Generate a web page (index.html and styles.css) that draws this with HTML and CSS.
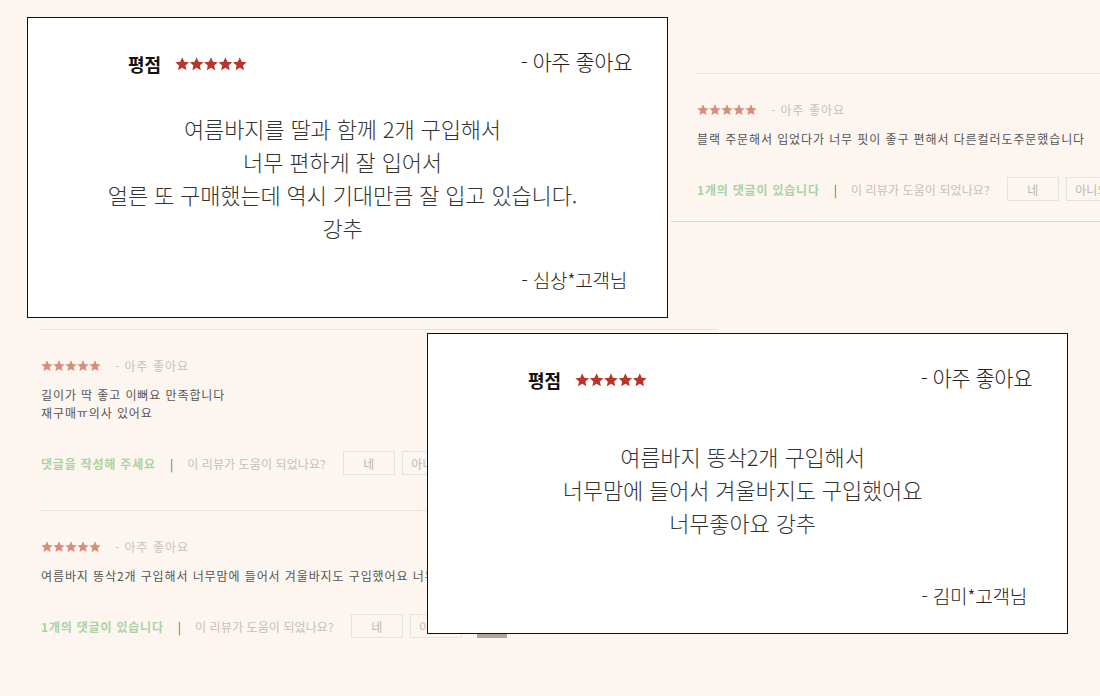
FILE: index.html
```html
<!DOCTYPE html>
<html lang="ko">
<head>
<meta charset="utf-8">
<title>리뷰</title>
<link rel="stylesheet" href="styles.css">
</head>
<body>
<svg class="defs" width="0" height="0" aria-hidden="true">
  <defs>
    <symbol id="star" viewBox="0 0 24 24">
      <polygon points="12,0.5 15.29,7.97 23.41,8.79 17.33,14.23 19.05,22.21 12,18.1 4.95,22.21 6.67,14.23 0.59,8.79 8.71,7.97"/>
    </symbol>
    <symbol id="stars5" viewBox="0 0 120 24">
      <use href="#star" x="0" y="0" width="24" height="24"/>
      <use href="#star" x="24" y="0" width="24" height="24"/>
      <use href="#star" x="48" y="0" width="24" height="24"/>
      <use href="#star" x="72" y="0" width="24" height="24"/>
      <use href="#star" x="96" y="0" width="24" height="24"/>
    </symbol>
  </defs>
</svg>
<main class="canvas">
  <section class="list list-right">
    <article class="review review-last">
      <div class="review-head">
        <svg class="stars-sm"><use href="#stars5"/></svg>
        <span class="grade">- 아주 좋아요</span>
      </div>
      <p class="review-text">블랙 주문해서 입었다가 너무 핏이 좋구 편해서 다른컬러도주문했습니다</p>
      <div class="review-foot">
        <span class="reply-count">1개의 댓글이 있습니다</span>
        <span class="divider">|</span>
        <span class="helpful">이 리뷰가 도움이 되었나요?</span>
        <button class="vote">네</button>
        <button class="vote">아니오</button>
      </div>
    </article>
    <div class="rule"></div>
  </section>

  <section class="list list-left">
    <article class="review">
      <div class="review-head">
        <svg class="stars-sm"><use href="#stars5"/></svg>
        <span class="grade">- 아주 좋아요</span>
      </div>
      <p class="review-text">길이가 딱 좋고 이뻐요 만족합니다<br>재구매ㅠ의사 있어요</p>
      <div class="review-foot">
        <span class="reply-count">댓글을 작성해 주세요</span>
        <span class="divider">|</span>
        <span class="helpful">이 리뷰가 도움이 되었나요?</span>
        <button class="vote">네</button>
        <button class="vote">아니오</button>
        <span class="write-btn"></span>
      </div>
    </article>
    <article class="review">
      <div class="review-head">
        <svg class="stars-sm"><use href="#stars5"/></svg>
        <span class="grade">- 아주 좋아요</span>
      </div>
      <p class="review-text">여름바지 똥삭2개 구입해서 너무맘에 들어서 겨울바지도 구입했어요 너무좋아요 강추</p>
      <div class="review-foot">
        <span class="reply-count">1개의 댓글이 있습니다</span>
        <span class="divider">|</span>
        <span class="helpful">이 리뷰가 도움이 되었나요?</span>
        <button class="vote">네</button>
        <button class="vote">아니오</button>
        <span class="write-btn"></span>
      </div>
    </article>
  </section>

  <article class="card card-1">
    <header class="card-head">
      <div class="score">
        <strong class="score-label">평점</strong>
        <svg class="stars-lg"><use href="#stars5"/></svg>
      </div>
      <span class="card-grade">- 아주 좋아요</span>
    </header>
    <div class="card-body">
      <p>여름바지를 딸과 함께 2개 구입해서<br>너무 편하게 잘 입어서<br>얼른 또 구매했는데 역시 기대만큼 잘 입고 있습니다.<br>강추</p>
    </div>
    <footer class="card-author">- 심상*고객님</footer>
  </article>

  <article class="card card-2">
    <header class="card-head">
      <div class="score">
        <strong class="score-label">평점</strong>
        <svg class="stars-lg"><use href="#stars5"/></svg>
      </div>
      <span class="card-grade">- 아주 좋아요</span>
    </header>
    <div class="card-body">
      <p>여름바지 똥삭2개 구입해서<br>너무맘에 들어서 겨울바지도 구입했어요<br>너무좋아요 강추</p>
    </div>
    <footer class="card-author">- 김미*고객님</footer>
  </article>
</main>
</body>
</html>
```

FILE: styles.css
```css
* {
  box-sizing: border-box;
  margin: 0;
  padding: 0;
}

html,
body {
  width: 1100px;
  height: 696px;
  overflow: hidden;
}

body {
  background: #fdf5ef;
  font-family: "Noto Sans CJK KR", "Noto Sans", sans-serif;
  color: #555;
}

.defs {
  position: absolute;
  width: 0;
  height: 0;
}

.canvas {
  position: relative;
  width: 1100px;
  height: 696px;
}

/* background review lists (collage pieces) */
.list {
  position: absolute;
}

.list-right {
  left: 697px;
  top: 73px;
  width: 403px;
}

.list-left {
  left: 41px;
  top: 329px;
  width: 677px;
}

.review {
  border-top: 1px solid #e9e2db;
  padding: 29px 0 35px;
}

.review-last {
  padding-bottom: 20px;
}

.rule {
  margin-left: -26px;
  border-top: 1px solid #ddd6cf;
}

.review-head {
  display: flex;
  align-items: center;
  gap: 14px;
  height: 14px;
}

.stars-sm {
  width: 60px;
  height: 12px;
  fill: #d98e7c;
}

.grade {
  font-size: 12px;
  line-height: 14px;
  letter-spacing: 1px;
  color: #c9c1bb;
}

.review-text {
  margin-top: 13px;
  font-size: 12px;
  line-height: 18px;
  letter-spacing: 0.9px;
  white-space: nowrap;
  color: #555;
}

.review-foot {
  display: flex;
  align-items: center;
  height: 24px;
  margin-top: 29px;
  font-size: 12px;
  white-space: nowrap;
}

.reply-count {
  color: #a9d3a3;
  font-weight: 700;
  letter-spacing: 0.8px;
}

.divider {
  margin: 0 14px 0 14px;
  color: #666;
}

.helpful {
  font-size: 12px;
  letter-spacing: 0.1px;
  color: #c7c0ba;
}

.vote {
  flex: none;
  width: 52px;
  height: 24px;
  margin-left: 17px;
  border: 1px solid #e9e2db;
  background: transparent;
  font-family: inherit;
  font-size: 12px;
  color: #bdb6b0;
}

.vote + .vote {
  margin-left: 7px;
}

.write-btn {
  flex: none;
  width: 30px;
  height: 24px;
  margin-left: 15px;
  background: #aaa59f;
}

/* overlay cards */
.card {
  position: absolute;
  width: 641px;
  height: 301px;
  display: flex;
  flex-direction: column;
  padding: 28px 0 22px;
  background: #fff;
  border: 1px solid #111;
  color: #333;
}

.card-1 {
  left: 27px;
  top: 17px;
}

.card-2 {
  left: 427px;
  top: 333px;
}

.card-head {
  display: flex;
  justify-content: space-between;
  height: 30px;
  padding: 0 35px 0 100px;
}

.score {
  display: flex;
  align-items: center;
  gap: 14px;
  padding-top: 6px;
}

.score-label {
  font-size: 18px;
  font-weight: 700;
  letter-spacing: 0;
  color: #111;
}

.stars-lg {
  width: 72px;
  height: 14.4px;
  fill: #b9352c;
}

.card-grade {
  font-size: 21px;
  line-height: 30px;
  font-weight: 300;
  letter-spacing: -0.5px;
  color: #222;
}

.card-body {
  flex: 1;
  display: flex;
  align-items: center;
  justify-content: center;
  padding: 10px 10px 0 0;
  text-align: center;
  font-size: 22px;
  line-height: 33px;
  font-weight: 300;
  letter-spacing: -0.15px;
  color: #333;
}

.card-1 .card-body {
  padding-top: 14px;
}

.card-2 .card-body {
  padding-top: 6px;
}

.card-author {
  height: 30px;
  padding-right: 40px;
  text-align: right;
  font-size: 19px;
  line-height: 30px;
  font-weight: 300;
  letter-spacing: -0.25px;
  color: #222;
}
```
